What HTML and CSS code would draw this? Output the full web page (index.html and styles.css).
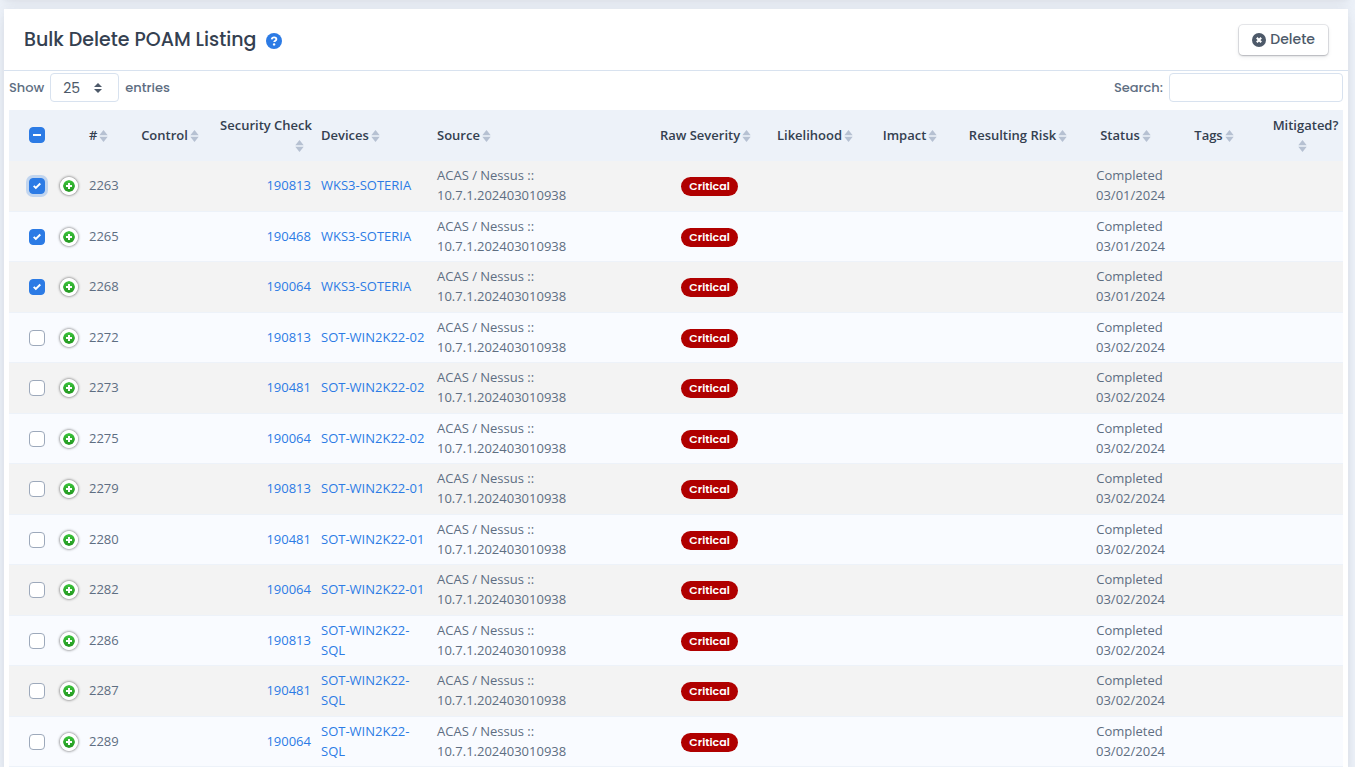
FILE: index.html
```html
<!DOCTYPE html>
<html lang="en">
<head>
    <meta charset="UTF-8">
    <title>Bulk Delete POAM Listing</title>
    <meta name="viewport" content="width=device-width, initial-scale=1.0">
    <link rel="stylesheet" href="styles.css">
</head>
<body>
    <div class="card card-above"></div>
    <div class="card">
        <div class="card-header">
            <h1>Bulk Delete POAM Listing
                <a href="#help" class="help" aria-label="Help">
                    <svg viewBox="0 0 16 16" width="16" height="16"><circle cx="8" cy="8" r="8" fill="#2c7be5"/><path d="M5.7 6.3c.2-1.3 1.1-2 2.4-2 1.3 0 2.3.7 2.3 1.9 0 1.5-2.2 1.5-2.2 2.9" fill="none" stroke="#fff" stroke-width="1.8"/><circle cx="8.1" cy="11.4" r="1.2" fill="#fff"/></svg>
                </a>
            </h1>
            <button type="button" class="btn">
                <svg viewBox="0 0 16 16" width="14" height="14"><circle cx="8" cy="8" r="8" fill="#4d5969"/><path d="M5.5 5.5l5 5M10.5 5.5l-5 5" stroke="#fff" stroke-width="2.4"/></svg>
                Delete
            </button>
        </div>
        <div class="card-body">
            <div class="table-tools">
                <label>Show
                    <select class="form-select">
                        <option>10</option>
                        <option selected>25</option>
                        <option>50</option>
                        <option>100</option>
                    </select>
                    entries</label>
                <label>Search: <input type="search" class="form-control"></label>
            </div>
            <table id="poam-table">
                <colgroup>
                    <col class="col-check">
                    <col class="col-expand">
                    <col class="col-id">
                    <col class="col-control">
                    <col class="col-security">
                    <col class="col-devices">
                    <col class="col-source">
                    <col class="col-severity">
                    <col class="col-likelihood">
                    <col class="col-impact">
                    <col class="col-risk">
                    <col class="col-status">
                    <col class="col-tags">
                    <col class="col-mitigated">
                </colgroup>
                <thead>
                    <tr>
                        <th class="check"><input type="checkbox" id="check-all" class="partial" aria-label="Select all"></th>
                        <th></th>
                        <th class="sort">#</th>
                        <th class="sort center">Control</th>
                        <th class="sort right">Security Check</th>
                        <th class="sort">Devices</th>
                        <th class="sort">Source</th>
                        <th class="sort center">Raw Severity</th>
                        <th class="sort center">Likelihood</th>
                        <th class="sort center">Impact</th>
                        <th class="sort center">Resulting Risk</th>
                        <th class="sort center">Status</th>
                        <th class="sort center">Tags</th>
                        <th class="sort center">Mitigated?</th>
                    </tr>
                </thead>
                <tbody>
                    <!-- POAM rows are inserted here -->
                </tbody>
            </table>
        </div>
    </div>

    <script>
        const source = 'ACAS / Nessus :: 10.7.1.202403010938';
        const poams = [
            { id: 2263, check: 190813, device: 'WKS3-SOTERIA', date: '03/01/2024', selected: true, active: true },
            { id: 2265, check: 190468, device: 'WKS3-SOTERIA', date: '03/01/2024', selected: true },
            { id: 2268, check: 190064, device: 'WKS3-SOTERIA', date: '03/01/2024', selected: true },
            { id: 2272, check: 190813, device: 'SOT-WIN2K22-02', date: '03/02/2024' },
            { id: 2273, check: 190481, device: 'SOT-WIN2K22-02', date: '03/02/2024' },
            { id: 2275, check: 190064, device: 'SOT-WIN2K22-02', date: '03/02/2024' },
            { id: 2279, check: 190813, device: 'SOT-WIN2K22-01', date: '03/02/2024' },
            { id: 2280, check: 190481, device: 'SOT-WIN2K22-01', date: '03/02/2024' },
            { id: 2282, check: 190064, device: 'SOT-WIN2K22-01', date: '03/02/2024' },
            { id: 2286, check: 190813, device: 'SOT-WIN2K22-SQL', date: '03/02/2024' },
            { id: 2287, check: 190481, device: 'SOT-WIN2K22-SQL', date: '03/02/2024' },
            { id: 2289, check: 190064, device: 'SOT-WIN2K22-SQL', date: '03/02/2024' }
        ];

        // Populate the table
        const tbody = document.querySelector('#poam-table tbody');
        poams.forEach(poam => {
            const row = tbody.insertRow();
            row.innerHTML = `
                <td class="check"><input type="checkbox" class="${poam.active ? 'active' : ''}" aria-label="Select ${poam.id}" ${poam.selected ? 'checked' : ''}></td>
                <td class="expand-cell"><button type="button" class="expand" aria-label="Expand ${poam.id}"><svg viewBox="0 0 14 14" width="14" height="14"><path d="M7 4v6M4 7h6" stroke="#fff" stroke-width="2"/></svg></button></td>
                <td>${poam.id}</td>
                <td></td>
                <td class="right"><a href="#check-${poam.check}">${poam.check}</a></td>
                <td><a href="#device">${poam.device}</a></td>
                <td>${source}</td>
                <td class="center"><span class="badge">Critical</span></td>
                <td></td>
                <td></td>
                <td></td>
                <td class="center">Completed ${poam.date}</td>
                <td></td>
                <td></td>`;
        });
    </script>
</body>
</html>
```
FILE: styles.css
```css
* {
    box-sizing: border-box;
}
body {
    font-family: "Open Sans", sans-serif;
    font-size: 13px;
    line-height: 20px;
    color: #5e6e82;
    background-color: #edf2f9;
    margin: 0;
    padding: 0 7px 0 4px;
    overflow: hidden;
}
a {
    color: #2c7be5;
    text-decoration: none;
}
.card {
    background-color: #ffffff;
    box-shadow: 0 7px 14px rgba(65, 69, 88, 0.1), 0 3px 6px rgba(0, 0, 0, 0.04);
}
.card-above {
    height: 20px;
    margin-top: -20px;
    margin-bottom: 9px;
    box-shadow: 0 7px 14px rgba(65, 69, 88, 0.07), 0 0 4px rgba(65, 69, 88, 0.05);
}
.card-header {
    display: flex;
    align-items: center;
    justify-content: space-between;
    height: 62px;
    padding: 0 20px;
    border-bottom: 1px solid #d8e2ef;
}
h1 {
    display: flex;
    align-items: center;
    gap: 9px;
    margin: 0;
    font-family: Poppins, Inter, sans-serif;
    font-size: 19px;
    font-weight: 500;
    color: #344050;
}
.help {
    display: flex;
    padding-top: 2px;
}
.btn {
    display: flex;
    align-items: center;
    gap: 4px;
    height: 30px;
    padding: 0 13px;
    font-family: Poppins, Inter, sans-serif;
    font-size: 14px;
    font-weight: 500;
    color: #4d5969;
    background-color: #ffffff;
    border: 0;
    border-radius: 4px;
    box-shadow: 0 0 0 1px rgba(43, 45, 80, 0.1), 0 2px 5px rgba(43, 45, 80, 0.08), 0 1px 2px rgba(0, 0, 0, 0.2);
}
.card-body {
    padding: 2px 5px 0;
}
.table-tools {
    display: flex;
    justify-content: space-between;
    margin-bottom: 8px;
}
.table-tools label {
    display: flex;
    align-items: center;
    gap: 6px;
    font-family: Poppins, Inter, sans-serif;
    font-size: 13px;
    font-weight: 500;
}
.form-select, .form-control {
    height: 29px;
    font-family: Poppins, Inter, sans-serif;
    font-size: 14px;
    color: #4d5969;
    background-color: #ffffff;
    border: 1px solid #d8e2ef;
    border-radius: 4px;
}
.form-select {
    appearance: none;
    width: 69px;
    padding: 0 12px;
    background-image: url("data:image/svg+xml,%3Csvg xmlns='http://www.w3.org/2000/svg' viewBox='0 0 8 10'%3E%3Cpath fill='%234d5969' d='M4 0l4 4H0zM0 6h8l-4 4z'/%3E%3C/svg%3E");
    background-repeat: no-repeat;
    background-position: right 16px center;
    background-size: 8px 10px;
}
.form-control {
    appearance: none;
    width: 174px;
    padding: 0 8px;
}
table {
    width: 100%;
    table-layout: fixed;
    border-collapse: separate;
    border-spacing: 0;
}
.col-check { width: 47px; }
.col-expand { width: 28px; }
.col-id { width: 51px; }
.col-control { width: 78px; }
.col-security { width: 103px; }
.col-devices { width: 116px; }
.col-severity { width: 107px; }
.col-likelihood { width: 112px; }
.col-impact { width: 78px; }
.col-risk { width: 138px; }
.col-status { width: 77px; }
.col-tags { width: 100px; }
.col-mitigated { width: 75px; }
th, td {
    padding: 4px 5px 5px;
    text-align: left;
    vertical-align: middle;
}
th {
    height: 51px;
    padding: 5px 4px 6px 5px;
    font-weight: 600;
    color: #344050;
    background-color: #edf2f9;
}
th.center {
    padding-left: 2px;
    padding-right: 2px;
}
td {
    border-bottom: 1px solid #edf2f9;
}
tbody tr {
    height: 50px;
    background-color: #f9fbff;
}
tbody tr:nth-child(odd) {
    height: 51px;
    background-color: #f3f3f3;
}
tbody tr:nth-child(odd) td {
    padding-bottom: 6px;
}
.center {
    text-align: center;
}
.right {
    text-align: right;
}
/* sort arrows */
.sort::after {
    content: "";
    display: inline-block;
    width: 9px;
    height: 12px;
    margin: 0 8px 0 2px;
    vertical-align: -2px;
    background: url("data:image/svg+xml,%3Csvg xmlns='http://www.w3.org/2000/svg' width='9' height='12' viewBox='0 0 9 12'%3E%3Cpath fill='%23b6c1d2' d='M4.5 0L8.7 5.3H.3zM.3 6.7h8.4L4.5 12z'/%3E%3C/svg%3E") no-repeat;
}
.check {
    padding-left: 20px;
    padding-right: 0;
}
td.check, td.expand-cell {
    padding-top: 6px;
}
input[type="checkbox"] {
    appearance: none;
    display: block;
    width: 16px;
    height: 16px;
    margin: 0;
    background: #ffffff no-repeat center;
    border: 1px solid #9da9bb;
    border-radius: 4px;
}
input[type="checkbox"]:checked {
    background-color: #2c7be5;
    background-image: url("data:image/svg+xml,%3Csvg xmlns='http://www.w3.org/2000/svg' width='8' height='8' viewBox='0 0 8 8'%3E%3Cpath fill='none' stroke='%23fff' stroke-width='2' d='M.7 3.9l2.1 2L7.3 1.5'/%3E%3C/svg%3E");
    border-color: #2c7be5;
}
input[type="checkbox"].partial {
    background-color: #2c7be5;
    background-image: url("data:image/svg+xml,%3Csvg xmlns='http://www.w3.org/2000/svg' width='8' height='2'%3E%3Cpath fill='%23fff' d='M0 0h8v2H0z'/%3E%3C/svg%3E");
    border-color: #2c7be5;
}
input[type="checkbox"].active {
    box-shadow: 0 0 0 3px rgba(44, 123, 229, 0.25);
}
.expand-cell {
    padding-left: 4px;
    padding-right: 0;
}
.expand {
    display: flex;
    align-items: center;
    justify-content: center;
    width: 18px;
    height: 18px;
    padding: 0;
    background: linear-gradient(#3cc43c, #23961f) padding-box;
    border: 3px solid #ffffff;
    border-radius: 50%;
    box-shadow: 0 0 3px #444444;
}
.expand svg {
    flex: none;
}
.badge {
    display: inline-block;
    padding: 0 8px;
    font-family: Poppins, Inter, sans-serif;
    font-size: 11px;
    font-weight: 600;
    line-height: 19px;
    color: #ffffff;
    background-color: #b00000;
    border-radius: 10px;
}
```
